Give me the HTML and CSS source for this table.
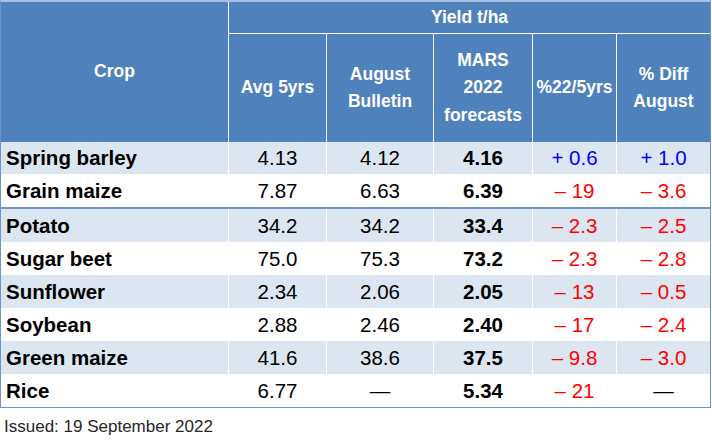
FILE: index.html
```html
<!DOCTYPE html>
<html lang="en">
<head>
<meta charset="utf-8">
<title>MARS yield forecasts</title>
<link rel="stylesheet" href="styles.css">
</head>
<body>
<div class="sheet">
  <div class="tbl">
    <div class="head">
      <div class="hcell crop-h">Crop</div>
      <div class="hcell yield-h">Yield t/ha</div>
      <div class="hcell">Avg 5yrs</div>
      <div class="hcell">August<br>Bulletin</div>
      <div class="hcell">MARS<br>2022<br>forecasts</div>
      <div class="hcell">%22/5yrs</div>
      <div class="hcell">% Diff<br>August</div>
    </div>
    <div class="row light first"><div class="name">Spring barley</div><div>4.13</div><div>4.12</div><div class="b">4.16</div><div class="up">+ 0.6</div><div class="up">+ 1.0</div></div>
    <div class="row"><div class="name">Grain maize</div><div>7.87</div><div>6.63</div><div class="b">6.39</div><div class="dn">– 19</div><div class="dn">– 3.6</div></div>
    <div class="row light sep"><div class="name">Potato</div><div>34.2</div><div>34.2</div><div class="b">33.4</div><div class="dn">– 2.3</div><div class="dn">– 2.5</div></div>
    <div class="row"><div class="name">Sugar beet</div><div>75.0</div><div>75.3</div><div class="b">73.2</div><div class="dn">– 2.3</div><div class="dn">– 2.8</div></div>
    <div class="row light"><div class="name">Sunflower</div><div>2.34</div><div>2.06</div><div class="b">2.05</div><div class="dn">– 13</div><div class="dn">– 0.5</div></div>
    <div class="row"><div class="name">Soybean</div><div>2.88</div><div>2.46</div><div class="b">2.40</div><div class="dn">– 17</div><div class="dn">– 2.4</div></div>
    <div class="row light"><div class="name">Green maize</div><div>41.6</div><div>38.6</div><div class="b">37.5</div><div class="dn">– 9.8</div><div class="dn">– 3.0</div></div>
    <div class="row"><div class="name">Rice</div><div>6.77</div><div>—</div><div class="b">5.34</div><div class="dn">– 21</div><div>—</div></div>
  </div>
  <p class="issued">Issued: 19 September 2022</p>
</div>
</body>
</html>
```

FILE: styles.css
```css
html, body {
  margin: 0;
  padding: 0;
  background: #ffffff;
}

.sheet {
  width: 712px;
  font-family: "Liberation Sans", Arial, sans-serif;
}

.tbl {
  width: 709px;
  border-top: 2px solid #a9bfe2;
  border-left: 1px solid #6f93ca;
  border-right: 1px solid #6f93ca;
  border-bottom: 1px solid #6f93ca;
  background: #ffffff;
}

.head {
  display: grid;
  grid-template-columns: 227px 97px 106px 98px 83px 93px;
  grid-template-rows: 31px 108px;
  column-gap: 1px;
  row-gap: 1px;
  background: #ffffff;
}

.hcell {
  background: #4f81bd;
  color: #ffffff;
  font-weight: bold;
  font-size: 17.5px;
  line-height: 27.5px;
  display: flex;
  align-items: center;
  justify-content: center;
  text-align: center;
}

.crop-h {
  grid-row: 1 / 3;
  grid-column: 1;
}

.yield-h {
  grid-row: 1;
  grid-column: 2 / 7;
}

.row {
  display: grid;
  grid-template-columns: 227px 97px 106px 98px 83px 93px;
  column-gap: 1px;
  height: 33px;
  background: #ffffff;
}

.row.first {
  height: 32px;
}

.row.sep {
  border-top: 2px solid #6f93ca;
}

.row > div {
  display: flex;
  align-items: center;
  justify-content: center;
  font-size: 20.5px;
  color: #000000;
  background: #ffffff;
}

.row.light > div {
  background: #dce6f1;
}

.row > .name {
  justify-content: flex-start;
  padding-left: 5px;
  font-weight: bold;
}

.row > .b {
  font-weight: bold;
}

.row > .up {
  color: #0000ff;
}

.row > .dn {
  color: #ff0000;
}

.issued {
  margin: 9px 0 0 4px;
  font-size: 17px;
  line-height: 20px;
  color: #262626;
}
```
